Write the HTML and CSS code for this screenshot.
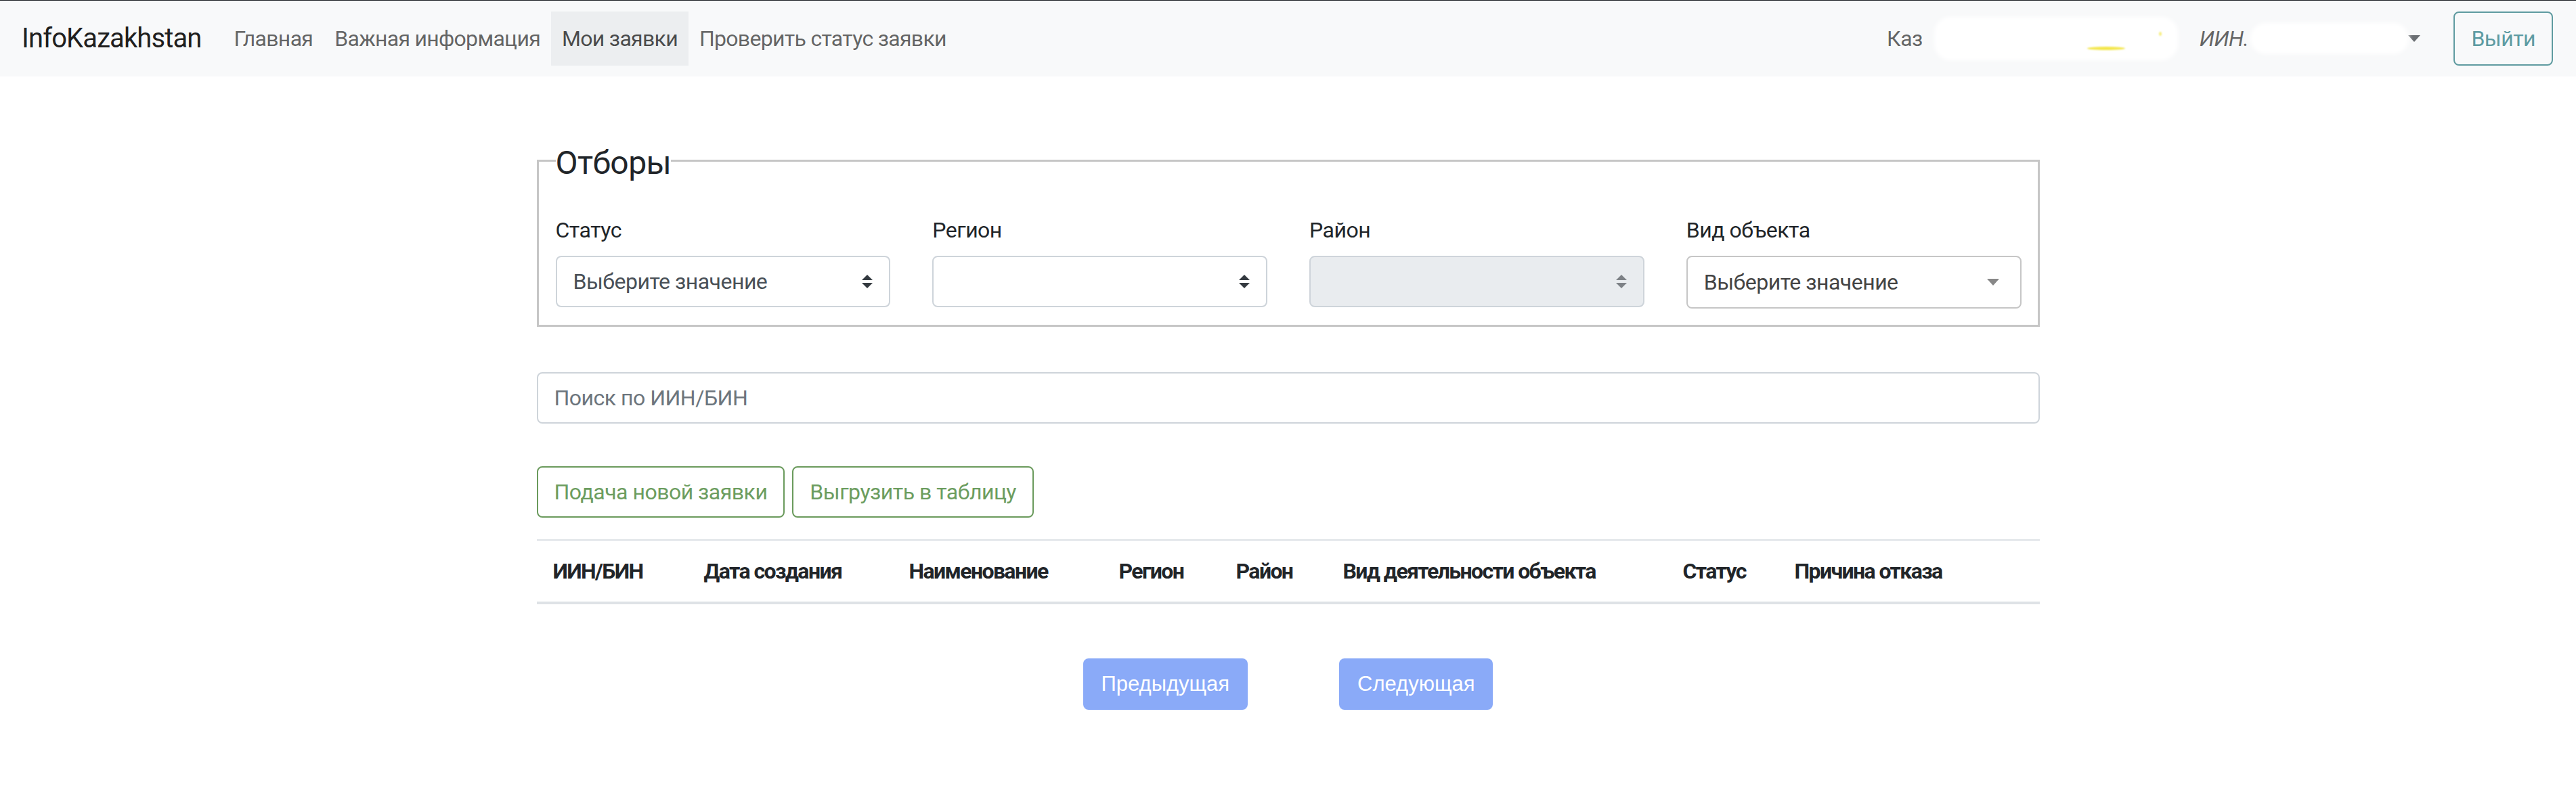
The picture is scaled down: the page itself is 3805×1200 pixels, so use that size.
FILE: index.html
```html
<!DOCTYPE html>
<html lang="ru">
<head>
<meta charset="utf-8">
<title>InfoKazakhstan — Мои заявки</title>
<link rel="stylesheet" href="styles.css">
</head>
<body>
<nav class="navbar">
  <a class="brand">InfoKazakhstan</a>
  <ul class="nav">
    <li><a class="nav-link">Главная</a></li>
    <li><a class="nav-link">Важная информация</a></li>
    <li><a class="nav-link active">Мои заявки</a></li>
    <li><a class="nav-link">Проверить статус заявки</a></li>
  </ul>
  <div class="nav-right">
    <span class="nav-text">Каз</span>
    <span class="redact redact-name"><span class="smudge smudge-a"></span><span class="smudge smudge-b"></span></span>
    <a class="user-toggle"><i class="iin">ИИН.</i><span class="redact redact-iin"></span><span class="caret"></span></a>
    <button class="btn-logout">Выйти</button>
  </div>
</nav>

<main class="container">
  <fieldset class="filters">
    <legend>Отборы</legend>
    <div class="filter-grid">
      <div class="field">
        <label>Статус</label>
        <div class="select"><span>Выберите значение</span><svg class="updown" viewBox="0 0 4 5"><path d="M2 0L0 2h4zm0 5L0 3h4z"/></svg></div>
      </div>
      <div class="field">
        <label>Регион</label>
        <div class="select"><span></span><svg class="updown" viewBox="0 0 4 5"><path d="M2 0L0 2h4zm0 5L0 3h4z"/></svg></div>
      </div>
      <div class="field">
        <label>Район</label>
        <div class="select disabled"><span></span><svg class="updown" viewBox="0 0 4 5"><path d="M2 0L0 2h4zm0 5L0 3h4z"/></svg></div>
      </div>
      <div class="field">
        <label>Вид объекта</label>
        <div class="select select2"><span>Выберите значение</span><span class="tri"></span></div>
      </div>
    </div>
  </fieldset>

  <input class="search" type="text" placeholder="Поиск по ИИН/БИН">

  <div class="actions">
    <button class="btn-green">Подача новой заявки</button>
    <button class="btn-green">Выгрузить в таблицу</button>
  </div>

  <table class="requests">
    <colgroup>
      <col class="c1"><col class="c2"><col class="c3"><col class="c4"><col class="c5"><col class="c6"><col class="c7"><col class="c8">
    </colgroup>
    <thead>
      <tr>
        <th>ИИН/БИН</th>
        <th>Дата создания</th>
        <th>Наименование</th>
        <th>Регион</th>
        <th>Район</th>
        <th>Вид деятельности объекта</th>
        <th>Статус</th>
        <th>Причина отказа</th>
      </tr>
    </thead>
    <tbody></tbody>
  </table>

  <div class="pager">
    <button class="page-btn">Предыдущая</button>
    <button class="page-btn">Следующая</button>
  </div>
</main>
</body>
</html>
```

FILE: styles.css
```css
* { box-sizing: border-box; }

html, body {
  margin: 0;
  padding: 0;
  background: #ffffff;
}

body {
  font-family: Roboto, "Noto Sans", "DejaVu Sans", sans-serif;
  font-size: 32px;
  line-height: 1.5;
  letter-spacing: -0.5px;
  color: #212529;
}

/* ---------- navbar ---------- */
.navbar {
  display: flex;
  align-items: center;
  height: 113px;
  padding: 0 34px 0 32px;
  background: #f8f9fa;
  border-top: 1px solid #1e2226;
}

.brand {
  font-size: 40px;
  line-height: 60px;
  letter-spacing: -0.9px;
  margin-right: 32px;
  color: rgba(0, 0, 0, 0.9);
  white-space: nowrap;
}

.nav {
  display: flex;
  list-style: none;
  margin: 0;
  padding: 0;
}

.nav-link {
  display: block;
  padding: 16px;
  line-height: 48px;
  letter-spacing: -0.7px;
  color: rgba(0, 0, 0, 0.62);
  white-space: nowrap;
}

.nav-link.active {
  background: #eceef0;
  color: rgba(0, 0, 0, 0.7);
}

.nav-right {
  margin-left: auto;
  display: flex;
  align-items: center;
}

.nav-text {
  color: rgba(0, 0, 0, 0.62);
  margin-right: 21px;
}

.redact {
  display: inline-block;
  background: #ffffff;
  border-radius: 20px;
  box-shadow: 0 0 6px 4px #ffffff;
  position: relative;
}

.redact-name {
  width: 352px;
  height: 56px;
  margin-right: 36px;
}

.smudge {
  position: absolute;
  background: #f3e64a;
  border-radius: 50%;
  filter: blur(1px);
}

.smudge-a { left: 222px; top: 40px; width: 56px; height: 5px; }
.smudge-b { left: 328px; top: 18px; width: 4px; height: 6px; opacity: 0.7; }

.user-toggle {
  display: flex;
  align-items: center;
  color: rgba(0, 0, 0, 0.6);
}

.iin {
  font-style: italic;
}

.redact-iin {
  width: 226px;
  height: 38px;
  margin-left: 7px;
}

.caret {
  display: inline-block;
  margin-left: 3px;
  border-top: 10px solid #6b6f73;
  border-left: 9px solid transparent;
  border-right: 9px solid transparent;
}

.btn-logout {
  margin-left: 49px;
  font: inherit;
  letter-spacing: inherit;
  line-height: 48px;
  padding: 14px 24px;
  color: #5d9ba2;
  background: transparent;
  border: 2px solid #5f9ba0;
  border-radius: 8px;
}

/* ---------- main ---------- */
.container {
  width: 2220px;
  margin: 0 auto;
  padding-top: 88px;
}

.filters {
  margin: 0;
  border: 3px solid #c6c6c6;
  padding: 0 24px 24px 25px;
  min-width: 0;
}

.filters legend {
  padding: 8px 0 0 0;
  font-size: 48px;
  line-height: 64px;
  letter-spacing: -0.6px;
  color: #212529;
}

.filter-grid {
  margin-top: 43px;
  display: grid;
  grid-template-columns: repeat(4, 1fr);
  column-gap: 62px;
  align-items: start;
}

.field label {
  display: block;
  line-height: 48px;
  margin-bottom: 14px;
}

.select {
  display: flex;
  align-items: center;
  justify-content: space-between;
  height: 76px;
  padding: 12px 24px;
  border: 2px solid #ced4da;
  border-radius: 8px;
  background: #ffffff;
  color: #495057;
  line-height: 48px;
}

.select.disabled {
  background: #e9ecef;
}

.updown {
  width: 16px;
  height: 20px;
  fill: #343a40;
}

.select.disabled .updown {
  fill: #7d8186;
}

.select.select2 {
  height: 78px;
  border-color: #c6c6c6;
  color: #444444;
  padding-right: 31px;
}

.tri {
  display: inline-block;
  border-top: 10px solid #888888;
  border-left: 9px solid transparent;
  border-right: 9px solid transparent;
}

.search {
  display: block;
  width: 100%;
  margin-top: 67px;
  height: 76px;
  padding: 12px 24px;
  font: inherit;
  letter-spacing: inherit;
  line-height: 48px;
  color: #495057;
  border: 2px solid #ced4da;
  border-radius: 8px;
  background: #ffffff;
}

.search::placeholder {
  color: #6c757d;
}

.actions {
  display: flex;
  gap: 11px;
  margin-top: 63px;
}

.btn-green {
  font: inherit;
  letter-spacing: inherit;
  line-height: 48px;
  padding: 12px 24px;
  color: #6c9d5f;
  background: #ffffff;
  border: 2px solid #6a9a5c;
  border-radius: 8px;
}

.requests {
  width: 100%;
  margin-top: 32px;
  border-collapse: collapse;
  table-layout: fixed;
}

.c1 { width: 223px; }
.c2 { width: 303px; }
.c3 { width: 310px; }
.c4 { width: 173px; }
.c5 { width: 158px; }
.c6 { width: 502px; }
.c7 { width: 165px; }
.c8 { width: 386px; }

.requests th {
  text-align: left;
  font-weight: 700;
  line-height: 48px;
  letter-spacing: -1.6px;
  padding: 21px 24px;
  border-top: 2px solid #dee2e6;
  border-bottom: 4px solid #dee2e6;
  white-space: nowrap;
  color: #212529;
}

.pager {
  display: flex;
  justify-content: center;
  gap: 135px;
  margin-top: 80px;
}

.page-btn {
  font-family: "Liberation Sans", Arial, sans-serif;
  font-size: 31px;
  letter-spacing: 0;
  line-height: 46px;
  padding: 15px 27px;
  color: #ffffff;
  background: #8aaaf8;
  border: none;
  border-radius: 8px;
}
```
